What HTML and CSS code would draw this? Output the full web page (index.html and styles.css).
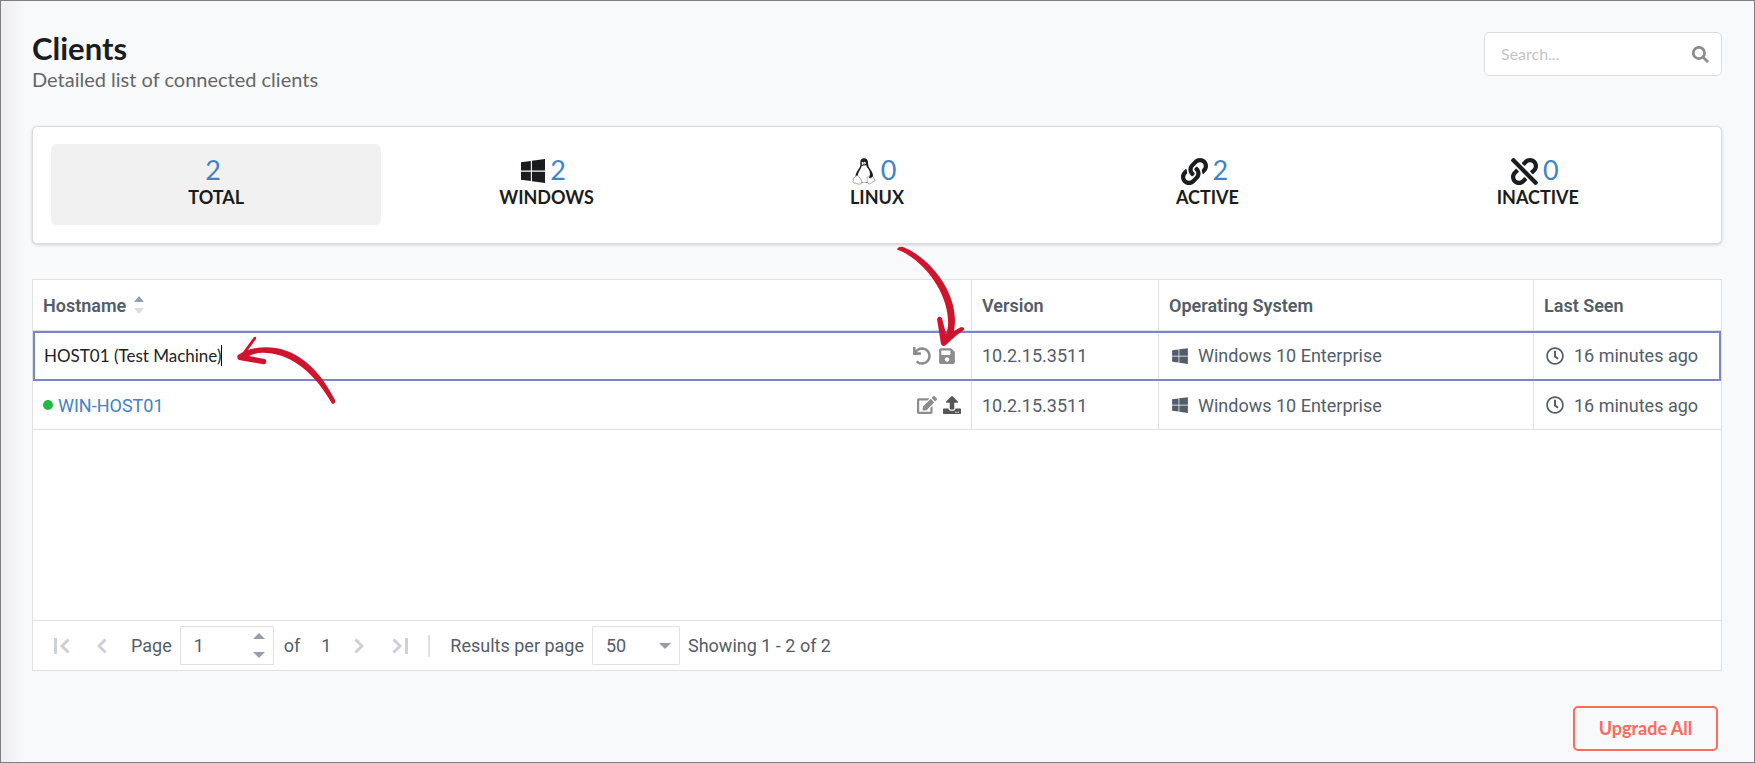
FILE: index.html
```html
<!DOCTYPE html>
<html lang="en">
<head>
    <meta charset="UTF-8">
    <meta name="viewport" content="width=device-width, initial-scale=1.0">
    <title>Clients</title>
    <link rel="stylesheet" href="styles.css">
</head>
<body>

    <!-- shared icons -->
    <svg class="icon-defs" aria-hidden="true">
        <symbol id="icon-windows" viewBox="0 0 448 512"><path d="M0 93.7l183.6-25.3v177.4H0V93.7zm0 324.6l183.6 25.3V268.4H0v149.9zm203.8 28L448 480V268.4H203.8v177.9zm0-380.6v180.1H448V32L203.8 65.7z"/></symbol>
        <symbol id="icon-clock" viewBox="0 0 512 512"><path d="M256 8C119 8 8 119 8 256s111 248 248 248 248-111 248-248S393 8 256 8zm0 448c-110.5 0-200-89.5-200-200S145.5 56 256 56s200 89.5 200 200-89.5 200-200 200zm61.8-104.4l-84.9-61.7c-3.1-2.3-4.9-5.9-4.9-9.7V116c0-6.6 5.4-12 12-12h32c6.6 0 12 5.4 12 12v141.7l66.8 48.6c5.4 3.9 6.5 11.4 2.6 16.8L334.6 349c-3.9 5.3-11.4 6.5-16.8 2.6z"/></symbol>
    </svg>

    <header class="page-header">
        <div>
            <h1>Clients</h1>
            <p class="subtitle">Detailed list of connected clients</p>
        </div>
        <div class="search">
            <input type="text" placeholder="Search..." aria-label="Search">
            <svg class="search-icon" viewBox="0 0 16 16"><circle cx="6.5" cy="6.5" r="5.3"/><path d="M10.5 10.5L15 15"/></svg>
        </div>
    </header>

    <section class="stats">
        <button class="stat active">
            <span class="value"><span>2</span></span>
            <span class="label">Total</span>
        </button>
        <button class="stat">
            <span class="value"><svg class="icon" width="24" height="28"><use href="#icon-windows"/></svg><span>2</span></span>
            <span class="label">Windows</span>
        </button>
        <button class="stat">
            <span class="value">
                <svg class="icon" width="24" height="28" viewBox="0 0 24 28">
                    <path d="M12 1.2C9.3 1.2 8.3 3 8.3 5.5c0 2 .3 3.4-.7 5.1-1.4 2.4-3.3 4.3-3.9 7.1-.3 1.4 0 2.5.4 3.4l5 4.9h6l5.3-4.2c.7-1.5.8-3.3.3-5.1-.7-2.700-2.500-4.300-3.600-6.300-.9-1.600-1-3-1.100-4.900C15.900 3 14.800 1.200 12 1.200z"/>
                    <path class="tux-white" d="M11.7 8.6c-.9.3-1.400.2-2 .2-.2 2-1.500 3.700-2.600 5.700-1 1.900-1.700 3.400-1.200 5.200l4 5.700c2 .7 4.600.4 6.100-.7l1.300-5.300c1.500-2.300.3-5.700-1.300-7.800-.9-1.300-1.400-2.100-1.700-3.400z"/>
                    <path class="tux-white" d="M9.7 5.1c.5-.5 1.1-.2 1.2.5l1.1-.1c.1-.9 1.4-1 1.7-.1v1.7l-2.1 1.2-1.8-.9z"/>
                    <path class="tux-foot" d="M5 18.500c-1.700.2-1 1.600-2.700 2-1.400.3-.9 1.700-.9 3.100-.8 1.900-.7 2.100 1.300 2.400 2.200.3 3.700 1.700 5.700 1 1.800-.6 1.900-2.200.8-3.900L6.700 19.400c-.5-.7-1-.9-1.700-.9zM16 19.500c-1 .6-.7 2.600-.8 4.600-.1 2.900 2.300 3.500 4 1.900 1.100-1 2.100-1.200 3.300-1.900.9-.5.6-1.100-.1-1.700-.9-.9-.3-2.500-1.600-3.100-1 2.100-3.300 2.400-4.800.2z"/>
                    <path d="M10.5 7.2l1.500-.8 1.300.7-1.500.8z"/>
                </svg><span>0</span>
            </span>
            <span class="label">Linux</span>
        </button>
        <button class="stat">
            <span class="value"><svg class="icon" width="27" height="27" viewBox="0 0 512 512"><path d="M326.612 185.391c59.747 59.809 58.927 155.698.36 214.59-.11.12-.24.25-.36.37l-67.2 67.2c-59.27 59.27-155.699 59.262-214.96 0-59.27-59.26-59.27-155.7 0-214.96l37.106-37.106c9.84-9.84 26.786-3.3 27.294 10.606.648 17.722 3.826 35.527 9.69 52.721 1.986 5.822.567 12.262-3.783 16.612l-13.087 13.087c-28.026 28.026-28.905 73.66-1.155 101.96 28.024 28.579 74.086 28.749 102.325.51l67.2-67.19c28.191-28.191 28.073-73.757 0-101.83-3.701-3.694-7.429-6.564-10.341-8.569a16.037 16.037 0 0 1-6.947-12.606c-.396-10.567 3.348-21.456 11.698-29.806l21.054-21.055c5.521-5.521 14.182-6.199 20.584-1.731a152.482 152.482 0 0 1 20.522 17.197zM467.547 44.449c-59.261-59.262-155.69-59.27-214.96 0l-67.2 67.2c-.12.12-.25.25-.36.37-58.566 58.892-59.387 154.781.36 214.59a152.454 152.454 0 0 0 20.521 17.196c6.402 4.468 15.064 3.789 20.584-1.731l21.054-21.055c8.35-8.35 12.094-19.239 11.698-29.806a16.037 16.037 0 0 0-6.947-12.606c-2.912-2.005-6.64-4.875-10.341-8.569-28.073-28.073-28.191-73.639 0-101.83l67.2-67.19c28.239-28.239 74.3-28.069 102.325.51 27.75 28.3 26.872 73.934-1.155 101.96l-13.087 13.087c-4.35 4.35-5.769 10.79-3.783 16.612 5.864 17.194 9.042 34.999 9.69 52.721.509 13.906 17.454 20.446 27.294 10.606l37.106-37.106c59.271-59.259 59.271-155.699.001-214.959z"/></svg><span>2</span></span>
            <span class="label">Active</span>
        </button>
        <button class="stat">
            <span class="value"><svg class="icon" width="27" height="27" viewBox="0 0 512 512"><path d="M304.083 405.907c4.686 4.686 4.686 12.284 0 16.971l-44.674 44.674c-59.263 59.262-155.693 59.266-214.961 0-59.264-59.265-59.264-155.696 0-214.96l44.675-44.675c4.686-4.686 12.284-4.686 16.971 0l39.598 39.598c4.686 4.686 4.686 12.284 0 16.971l-44.675 44.674c-28.072 28.073-28.072 73.75 0 101.823 28.072 28.072 73.75 28.073 101.824 0l44.674-44.674c4.686-4.686 12.284-4.686 16.971 0l39.597 39.598zm-56.568-260.216c4.686 4.686 12.284 4.686 16.971 0l44.674-44.674c28.072-28.075 73.75-28.073 101.824 0 28.072 28.073 28.072 73.75 0 101.823l-44.675 44.674c-4.686 4.686-4.686 12.284 0 16.971l39.598 39.598c4.686 4.686 12.284 4.686 16.971 0l44.675-44.675c59.263-59.265 59.263-155.695 0-214.96-59.266-59.264-155.695-59.264-214.961 0l-44.674 44.674c-4.686 4.686-4.686 12.284 0 16.971l39.597 39.598zm234.828 359.28l22.627-22.627c9.373-9.373 9.373-24.569 0-33.941L63.598 7.029c-9.373-9.373-24.569-9.373-33.941 0L7.03 29.657c-9.373 9.373-9.373 24.569 0 33.941l441.373 441.373c9.373 9.372 24.569 9.372 33.94 0z"/></svg><span>0</span></span>
            <span class="label">Inactive</span>
        </button>
    </section>

    <main class="grid">
        <div class="grid-body">
            <table>
                <colgroup>
                    <col>
                    <col class="col-version">
                    <col class="col-os">
                    <col class="col-seen">
                </colgroup>
                <thead>
                    <tr>
                        <th><span class="sortable">Hostname <svg width="10" height="18" viewBox="0 0 10 18"><path fill="#959fab" d="M0 6L5 0l5 6z"/><path fill="#dadde1" d="M0 12h10l-5 6z"/></svg></span></th>
                        <th>Version</th>
                        <th>Operating System</th>
                        <th>Last Seen</th>
                    </tr>
                </thead>
                <tbody>
                    <tr class="editing">
                        <td>
                            <div class="host">
                                <span class="edit-box"><input type="text" value="HOST01 (Test Machine)" aria-label="Hostname"><i class="caret"></i></span>
                                <span class="actions">
                                    <button aria-label="Undo"><svg width="18" height="18" viewBox="0 0 512 512"><path d="M212.333 224.333H12c-6.627 0-12-5.373-12-12V12C0 5.373 5.373 0 12 0h48c6.627 0 12 5.373 12 12v78.112C117.773 39.279 184.26 7.47 258.175 8.007c136.906.994 246.448 111.623 246.157 248.532C504.041 393.258 393.12 504 256.333 504c-64.089 0-122.496-24.313-166.51-64.215-5.099-4.622-5.334-12.554-.467-17.42l33.967-33.967c4.474-4.474 11.662-4.717 16.401-.525C170.76 415.336 211.58 432 256.333 432c97.268 0 176-78.716 176-176 0-97.267-78.716-176-176-176-58.496 0-110.28 28.476-142.274 72.333h98.274c6.627 0 12 5.373 12 12v48c0 6.627-5.373 12-12 12z"/></svg></button>
                                    <button aria-label="Save"><svg width="16" height="18" viewBox="0 0 448 512"><path d="M433.941 129.941l-83.882-83.882A48 48 0 0 0 316.118 32H48C21.49 32 0 53.49 0 80v352c0 26.51 21.49 48 48 48h352c26.51 0 48-21.49 48-48V163.882a48 48 0 0 0-14.059-33.941zM224 416c-35.346 0-64-28.654-64-64 0-35.346 28.654-64 64-64s64 28.654 64 64c0 35.346-28.654 64-64 64zm96-304.52V212c0 6.627-5.373 12-12 12H76c-6.627 0-12-5.373-12-12V108c0-6.627 5.373-12 12-12h228.52c3.183 0 6.235 1.264 8.485 3.515l3.48 3.48A11.996 11.996 0 0 1 320 111.48z"/></svg></button>
                                </span>
                            </div>
                        </td>
                        <td>10.2.15.3511</td>
                        <td><span class="with-icon"><svg width="16" height="18"><use href="#icon-windows"/></svg>Windows 10 Enterprise</span></td>
                        <td><span class="with-icon seen"><svg width="18" height="18"><use href="#icon-clock"/></svg>16 minutes ago</span></td>
                    </tr>
                    <tr>
                        <td>
                            <div class="host">
                                <span class="online"><i class="dot"></i><a href="#">WIN-HOST01</a></span>
                                <span class="actions">
                                    <button aria-label="Edit"><svg width="20" height="18" viewBox="0 0 576 512"><path d="M402.6 83.2l90.2 90.2c3.8 3.8 3.8 10 0 13.8L274.4 405.6l-92.8 10.3c-12.4 1.4-22.9-9.1-21.5-21.5l10.3-92.8L388.8 83.2c3.8-3.8 10-3.8 13.8 0zm162-22.9l-48.8-48.8c-15.2-15.2-39.9-15.2-55.2 0l-35.4 35.4c-3.8 3.8-3.8 10 0 13.8l90.2 90.2c3.8 3.8 10 3.8 13.8 0l35.4-35.4c15.2-15.3 15.2-40 0-55.2zM384 346.2V448H64V128h229.8c3.2 0 6.2-1.3 8.5-3.5l40-40c7.6-7.6 2.2-20.5-8.5-20.5H48C21.5 64 0 85.5 0 112v352c0 26.5 21.5 48 48 48h352c26.5 0 48-21.5 48-48V306.2c0-10.7-12.9-16-20.5-8.5l-40 40c-2.2 2.3-3.5 5.3-3.5 8.5z"/></svg></button>
                                    <button class="dark" aria-label="Upgrade"><svg width="18" height="18" viewBox="0 0 512 512"><path d="M296 384h-80c-13.3 0-24-10.7-24-24V192h-87.7c-17.8 0-26.7-21.5-14.1-34.1L242.3 5.7c7.5-7.5 19.8-7.5 27.3 0l152.2 152.2c12.6 12.6 3.7 34.1-14.1 34.1H320v168c0 13.3-10.7 24-24 24zm216-8v112c0 13.3-10.7 24-24 24H24c-13.3 0-24-10.7-24-24V376c0-13.3 10.7-24 24-24h136v8c0 30.9 25.1 56 56 56h80c30.9 0 56-25.1 56-56v-8h136c13.3 0 24 10.7 24 24zm-124 88c0-11-9-20-20-20s-20 9-20 20 9 20 20 20 20-9 20-20zm64 0c0-11-9-20-20-20s-20 9-20 20 9 20 20 20 20-9 20-20z"/></svg></button>
                                </span>
                            </div>
                        </td>
                        <td>10.2.15.3511</td>
                        <td><span class="with-icon"><svg width="16" height="18"><use href="#icon-windows"/></svg>Windows 10 Enterprise</span></td>
                        <td><span class="with-icon seen"><svg width="18" height="18"><use href="#icon-clock"/></svg>16 minutes ago</span></td>
                    </tr>
                </tbody>
            </table>

            <!-- hand drawn pointers over the edit row -->
            <svg class="arrow arrow-name" width="100" height="70" viewBox="0 0 100 70"><path d="M19 1L11 12C40 3 74 14 98 62Q99 65 96 66Q95 66 94 64C78 36 56 17 30 15Q20 14 12 18L28 21Q30 22 29 25Q28 27 25 26L2 22Q-1 20 1 17L6 14L17 -1Q20 -2 19 1Z"/></svg>
            <svg class="arrow arrow-save" width="72" height="102" viewBox="0 0 72 102"><path d="M0 3Q2 0 6 1C34 12 64 50 57 85L64 81Q68 81 67 84Q59 89 50 98Q46 102 44 98L40 73Q42 69 45 72L49 88Q50 86 51 80C53 54 34 20 4 5Q0 4 0 3Z"/></svg>
        </div>

        <footer class="pager">
            <button class="nav" aria-label="First page"><svg width="16" height="16" viewBox="0 0 16 16"><path d="M1.5 0v16M14.500 1.500L8 8l6.500 6.500"/></svg></button>
            <button class="nav prev" aria-label="Previous page"><svg width="10" height="16" viewBox="0 0 10 16"><path d="M8.5 1.5L2 8l6.5 6.5"/></svg></button>
            <label for="page">Page</label>
            <span class="spinner">
                <input type="text" id="page" value="1" inputmode="numeric">
                <span class="spin-buttons">
                    <button aria-label="Page up"><svg width="12" height="6" viewBox="0 0 12 6"><path d="M0 6l6-6 6 6z"/></svg></button>
                    <button aria-label="Page down"><svg width="12" height="6" viewBox="0 0 12 6"><path d="M0 0h12L6 6z"/></svg></button>
                </span>
            </span>
            <span class="of">of</span>
            <span class="page-count">1</span>
            <button class="nav next" aria-label="Next page"><svg width="10" height="16" viewBox="0 0 10 16"><path d="M1.5 1.5L8 8l-6.5 6.5"/></svg></button>
            <button class="nav last" aria-label="Last page"><svg width="16" height="16" viewBox="0 0 16 16"><path d="M14.5 0v16M1.5 1.5L8 8l-6.5 6.5"/></svg></button>
            <i class="divider"></i>
            <label for="per-page">Results per page</label>
            <span class="dropdown">
                <select id="per-page">
                    <option>50</option>
                    <option>100</option>
                </select>
                <svg width="12" height="6" viewBox="0 0 12 6"><path d="M0 0h12L6 6z"/></svg>
            </span>
            <span class="showing">Showing 1 - 2 of 2</span>
        </footer>
    </main>

    <div class="page-actions">
        <button class="upgrade">Upgrade All</button>
    </div>

</body>
</html>
```
FILE: styles.css
```css
* {
    box-sizing: border-box;
}
body {
    margin: 0;
    min-height: 100vh;
    padding: 31px 32px 11px 31px;
    border: 1px solid #7f7f82;
    background: #f8f9fb linear-gradient(to right, #ececee, #f8f9fb) no-repeat left / 25px 100%;
    color: #1b1c1d;
    font-family: Lato, "Liberation Sans", sans-serif;
    display: flex;
    flex-direction: column;
}
button, input, select {
    font-family: inherit;
    font-size: inherit;
    color: inherit;
}
button {
    border: 0;
    padding: 0;
    background: none;
    cursor: pointer;
}
svg {
    flex: none;
}
.icon-defs {
    position: absolute;
    width: 0;
    height: 0;
}

/* header */
.page-header {
    display: flex;
    justify-content: space-between;
    align-items: flex-start;
    height: 94px;
}
h1 {
    margin: 0;
    font-size: 31px;
    line-height: 32px;
}
.subtitle {
    margin: 0;
    font-size: 20px;
    line-height: 30px;
    color: #666;
}
.search {
    position: relative;
    width: 238px;
}
.search input {
    display: block;
    width: 100%;
    height: 44px;
    padding: 0 40px 2px 16px;
    border: 1px solid #dcddde;
    border-radius: 5px;
    background: #fff;
    font-size: 16px;
    outline: none;
}
.search input::placeholder {
    color: #c4c4c4;
}
.search-icon {
    position: absolute;
    right: 13px;
    top: 14px;
    width: 17px;
    height: 17px;
    fill: none;
    stroke: #8c8c8c;
    stroke-width: 2.6;
}

/* counters */
.stats {
    display: grid;
    grid-template-columns: repeat(5, 1fr);
    padding: 17px 18px 18px;
    border: 1px solid #dcddde;
    border-radius: 5px;
    background: #fff;
    box-shadow: 0 1px 3px rgba(34, 36, 38, .2);
}
.stat {
    display: flex;
    flex-direction: column;
    align-items: center;
    height: 81px;
    padding-top: 12px;
    border-radius: 6px;
}
.stat.active {
    background: #f1f1f1;
}
.value {
    display: flex;
    align-items: center;
    gap: 5px;
    height: 30px;
    padding-right: 6px;
    font-size: 27px;
    line-height: 30px;
    color: #4183c4;
}
.value span {
    padding-bottom: 2px;
}
.value .icon {
    fill: #1b1c1d;
}
.value .tux-white {
    fill: #fff;
}
.value .tux-foot {
    fill: #fff;
    stroke: #555;
    stroke-width: .5;
}
.label {
    font-size: 18px;
    line-height: 22px;
    font-weight: bold;
    text-transform: uppercase;
}

/* clients table */
.grid {
    margin-top: 35px;
    border: 1px solid #e0e1e1;
    background: #fff;
    color: #535d69;
    font-family: Roboto, "Liberation Sans", sans-serif;
    font-size: 18px;
    flex: 1;
    display: flex;
    flex-direction: column;
}
.grid-body {
    position: relative;
    flex: 1;
}
table {
    width: 100%;
    table-layout: fixed;
    border-collapse: separate;
    border-spacing: 0;
}
.col-version { width: 187px; }
.col-os { width: 375px; }
.col-seen { width: 187px; }
th, td {
    height: 50px;
    padding: 0 10px;
    border-bottom: 1px solid #e0e1e1;
    border-right: 1px solid #e0e1e1;
    text-align: left;
    white-space: nowrap;
}
th {
    height: 51px;
    font-weight: 600;
}
td {
    height: 49px;
}
th:last-child, td:last-child {
    border-right: 0;
}
.sortable, .host, .with-icon, .online, .actions {
    display: flex;
    align-items: center;
}
.sortable {
    gap: 8px;
}
.editing {
    outline: 2px solid #7986cb;
    outline-offset: -2px;
}
.editing td {
    height: 50px;
    border-bottom-color: transparent;
}
.host {
    justify-content: space-between;
}
.edit-box {
    display: flex;
    align-items: center;
    flex: 1;
}
.edit-box input {
    field-sizing: content;
    padding: 0 0 0 1px;
    border: 0;
    outline: none;
    background: none;
    color: #222;
    font-family: Lato, "Liberation Sans", sans-serif;
    font-size: 17px;
}
.caret {
    width: 1px;
    height: 21px;
    background: #000;
}
.actions {
    gap: 6px;
}
.actions button {
    display: flex;
    fill: #8c8c8c;
}
.editing .actions {
    gap: 8px;
    padding-right: 6px;
}
.actions .dark {
    fill: #555;
}
.online {
    gap: 5px;
}
.dot {
    width: 10px;
    height: 10px;
    border-radius: 50%;
    background: #21ba45;
}
a {
    color: #4183c4;
    text-decoration: none;
}
.with-icon {
    gap: 10px;
    padding-left: 3px;
    fill: #535d69;
}
.with-icon.seen {
    padding-left: 2px;
}
.arrow {
    position: absolute;
    overflow: visible;
    fill: #cf152d;
}
.arrow-name {
    left: 204px;
    top: 58px;
}
.arrow-save {
    left: 864px;
    top: -34px;
}

/* paging */
.pager {
    display: flex;
    align-items: center;
    height: 50px;
    padding-left: 21px;
    border-top: 1px solid #e0e1e1;
}
.nav {
    display: flex;
}
.nav path {
    fill: none;
    stroke: #cdd0d4;
    stroke-width: 3;
}
.nav.prev {
    margin: 0 24px 0 27px;
}
.spinner, .dropdown {
    position: relative;
    display: flex;
    align-items: center;
    margin-left: 8px;
    height: 39px;
    border: 1px solid #e0e1e1;
    border-radius: 1px;
}
.spinner {
    width: 94px;
}
.dropdown {
    width: 88px;
}
.spinner input, .dropdown select {
    width: 100%;
    height: 100%;
    padding: 0 0 1px 13px;
    border: 0;
    outline: none;
    appearance: none;
    background: none;
}
.spin-buttons {
    position: absolute;
    right: 8px;
    display: flex;
    flex-direction: column;
    gap: 13px;
}
.spin-buttons button {
    display: flex;
    fill: #959fab;
}
.dropdown svg {
    position: absolute;
    right: 8px;
    fill: #959fab;
    pointer-events: none;
}
.of {
    margin-left: 10px;
}
.page-count {
    margin-left: 21px;
}
.nav.next {
    margin-left: 23px;
}
.nav.last {
    margin-left: 28px;
}
.divider {
    width: 2px;
    height: 22px;
    margin: 0 20px;
    background: #dfe0e2;
}
.showing {
    margin-left: 8px;
}

.page-actions {
    display: flex;
    justify-content: flex-end;
    padding: 35px 4px 0 0;
}
.upgrade {
    width: 145px;
    height: 45px;
    padding-bottom: 2px;
    border: 2px solid #ff695e;
    border-radius: 5px;
    color: #ff695e;
    font-size: 18px;
    font-weight: bold;
}
```
